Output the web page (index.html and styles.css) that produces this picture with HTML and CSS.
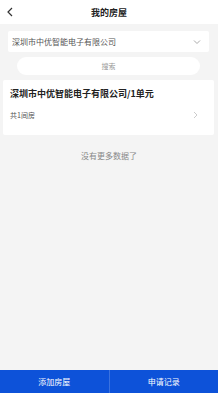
FILE: index.html
```html
<!DOCTYPE html>
<html lang="zh">
<head>
<meta charset="utf-8">
<link rel="stylesheet" href="styles.css">
</head>
<body>
<div class="page">
  <header class="topbar">
    <svg class="back" width="8" height="10" viewBox="0 0 8 10"><path d="M6 1 L2 5 L6 9" fill="none" stroke="#333" stroke-width="1.2"/></svg>
    <div class="title">我的房屋</div>
  </header>
  <div class="select">
    <span>深圳市中优智能电子有限公司</span>
    <svg width="8" height="6" viewBox="0 0 8 6"><path d="M1 1.5 L4 4.5 L7 1.5" fill="none" stroke="#aaa" stroke-width="1"/></svg>
  </div>
  <div class="search">搜索</div>
  <div class="card">
    <div class="card-title">深圳市中优智能电子有限公司/1单元</div>
    <div class="card-row">
      <span>共1间房</span>
      <svg width="5" height="8" viewBox="0 0 5 8"><path d="M1 1 L4 4 L1 7" fill="none" stroke="#ccc" stroke-width="1"/></svg>
    </div>
  </div>
  <div class="nomore">没有更多数据了</div>
  <div class="spacer"></div>
  <footer class="bottombar">
    <div class="btn">添加房屋</div>
    <div class="btn">申请记录</div>
  </footer>
</div>
</body>
</html>
```
FILE: styles.css
```css
html, body {
  margin: 0;
  padding: 0;
  background: #f4f4f4;
  font-family: "Noto Sans CJK SC", "Noto Sans", sans-serif;
}
.page {
  width: 218px;
  height: 393px;
  display: flex;
  flex-direction: column;
  overflow: hidden;
}
.topbar {
  height: 24px;
  background: #fff;
  display: flex;
  align-items: center;
  justify-content: center;
  position: relative;
}
.back {
  position: absolute;
  left: 6px;
  top: 7px;
}
.title {
  font-size: 9px;
  font-weight: bold;
  color: #222;
}
.select {
  margin: 7px 9px 0 8px;
  height: 21px;
  background: #fff;
  border-radius: 2px;
  display: flex;
  align-items: center;
  justify-content: space-between;
  padding: 0 8px 0 4px;
  font-size: 8px;
  color: #555;
}
.search {
  margin: 5px 18px 0 17px;
  height: 18px;
  background: #fff;
  border-radius: 9px;
  display: flex;
  align-items: center;
  justify-content: center;
  font-size: 7px;
  color: #999;
}
.card {
  margin: 5px 4px 0 3px;
  background: #fff;
  border-radius: 2px;
  padding: 7px 16px 10px 7px;
  height: 38px;
}
.card-title {
  font-size: 9px;
  font-weight: bold;
  color: #222;
  line-height: 13px;
}
.card-row {
  margin-top: 10px;
  display: flex;
  align-items: center;
  justify-content: space-between;
  font-size: 7px;
  color: #555;
  line-height: 10px;
}
.nomore {
  margin-top: 15px;
  text-align: center;
  font-size: 8px;
  color: #888;
}
.spacer {
  flex: 1;
}
.bottombar {
  height: 23px;
  background: #0d52d9;
  display: flex;
}
.btn {
  flex: 1;
  display: flex;
  align-items: center;
  justify-content: center;
  color: #fff;
  font-size: 8px;
}
.btn + .btn {
  border-left: 1px solid #3a72e0;
}
```
